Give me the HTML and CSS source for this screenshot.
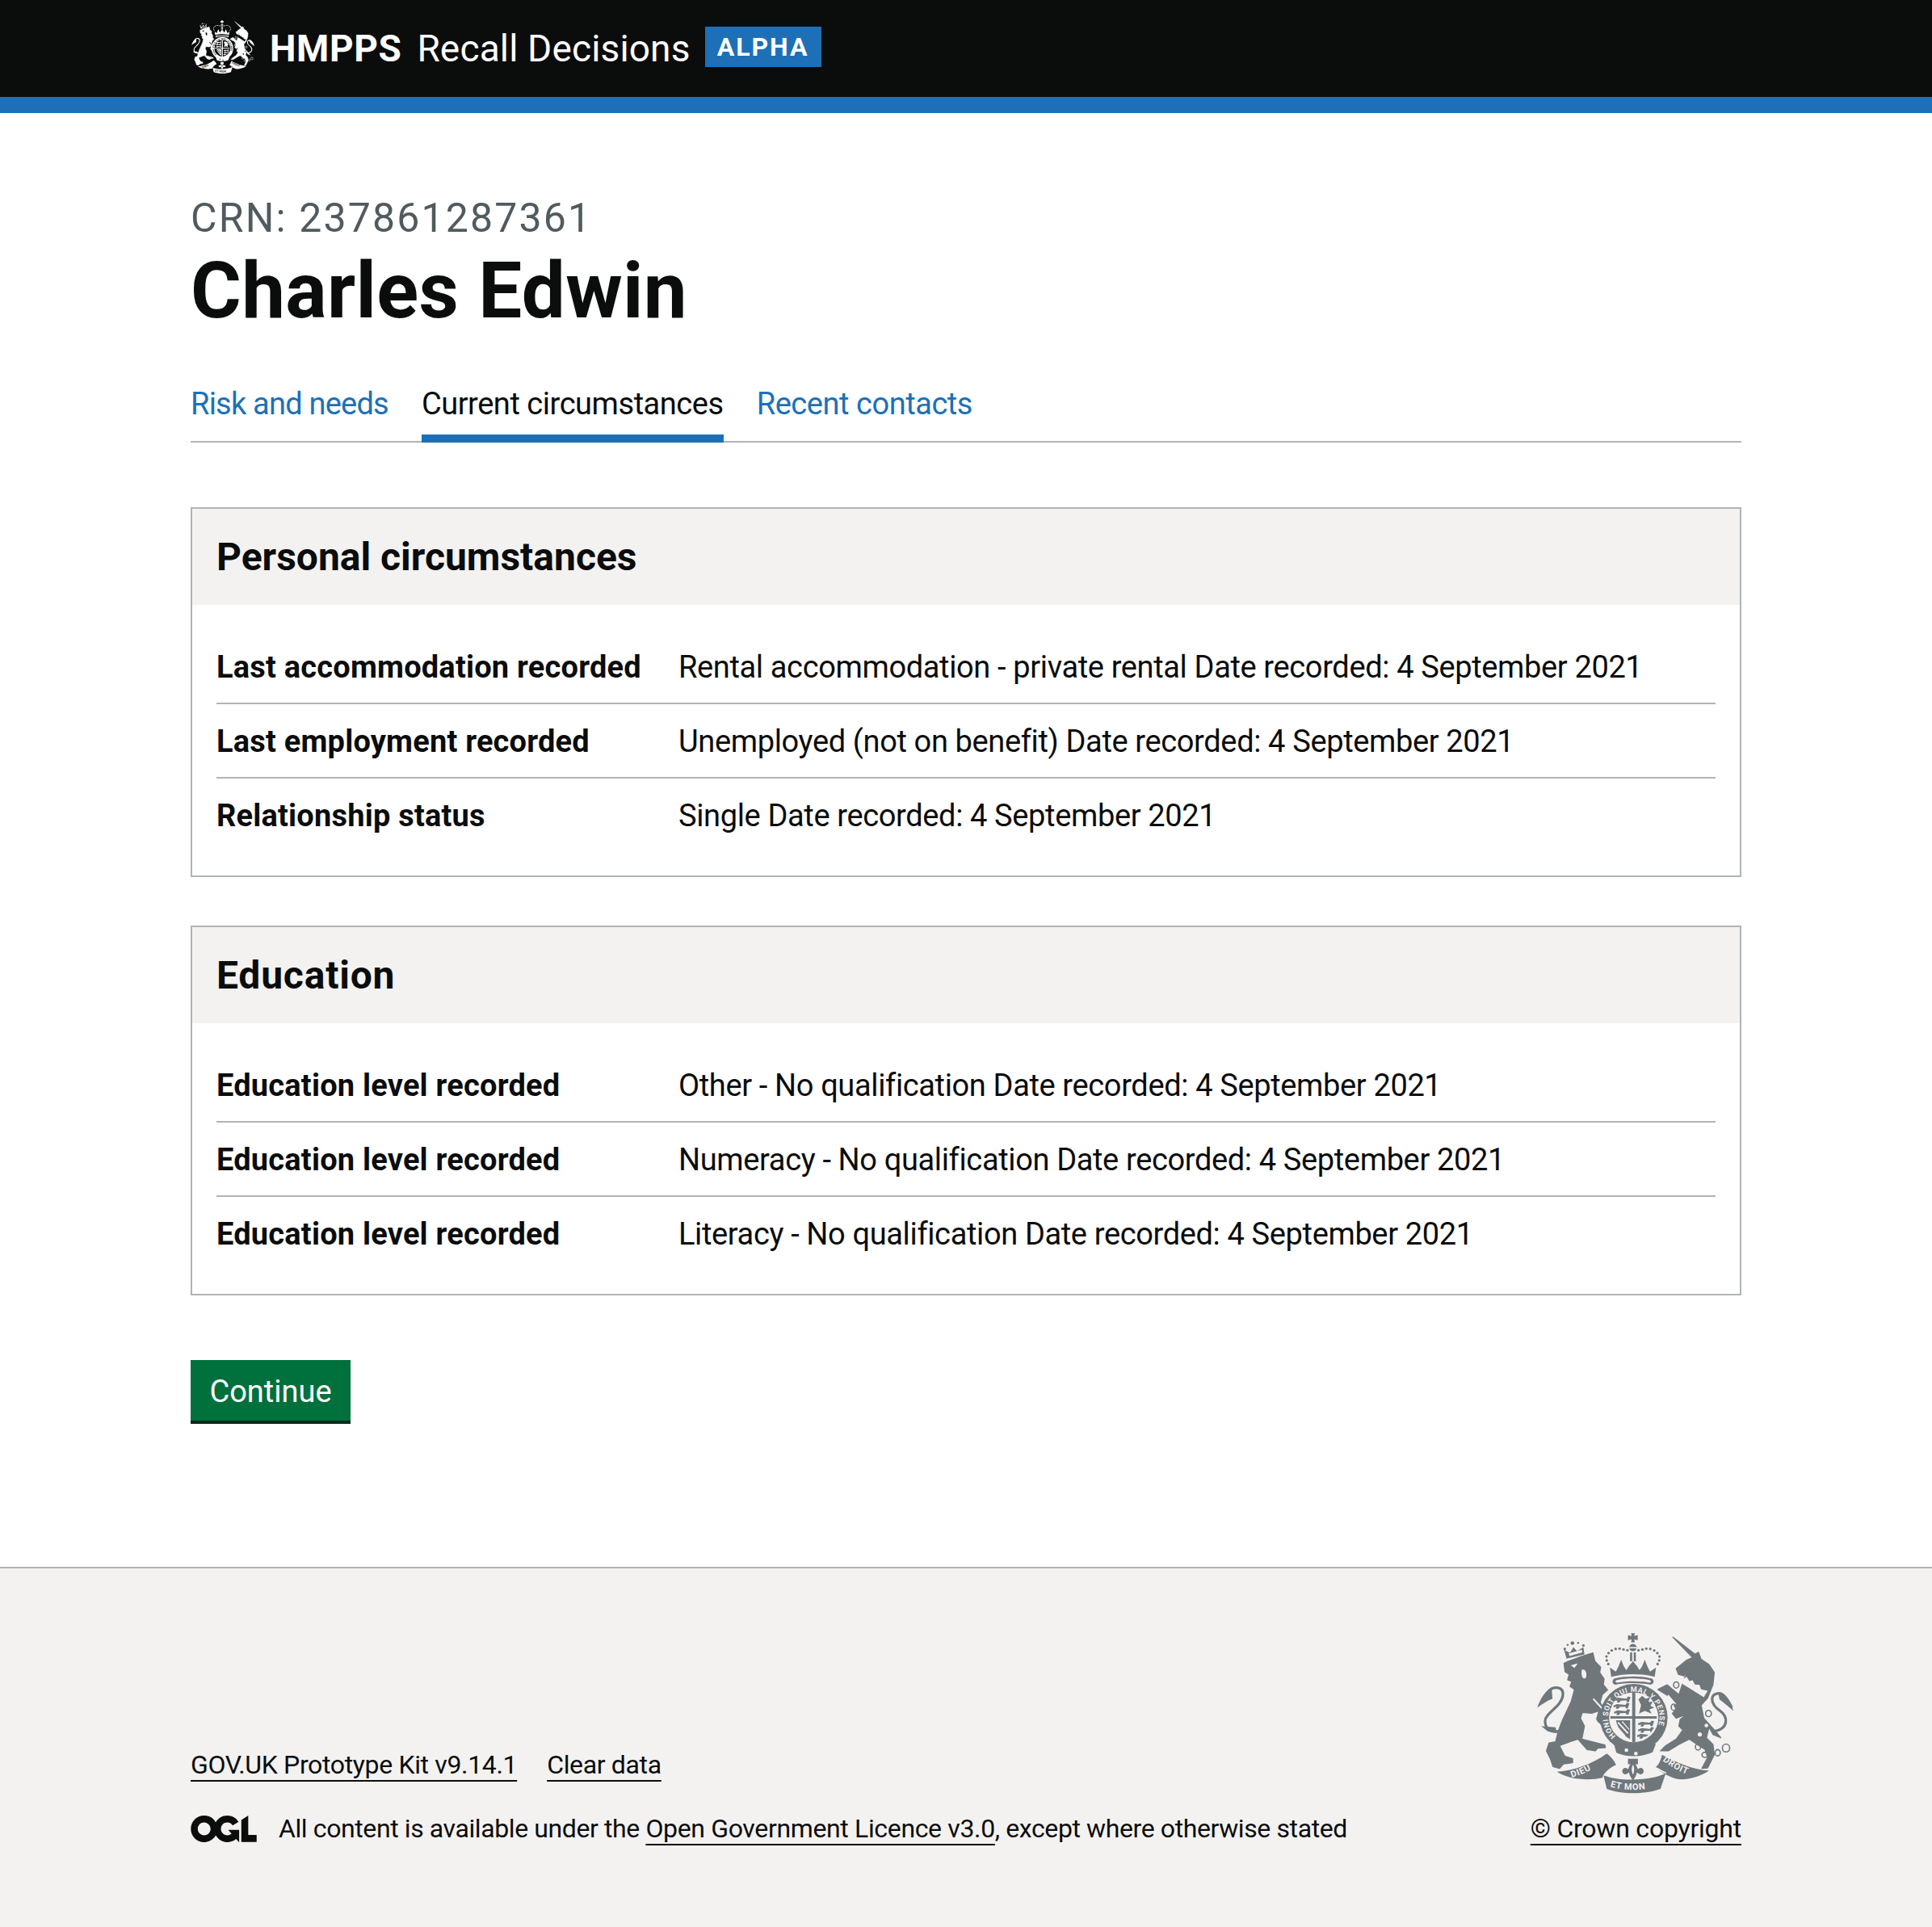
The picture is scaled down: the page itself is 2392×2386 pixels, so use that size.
FILE: index.html
```html
<!doctype html>
<html lang="en">
<head>
<meta charset="utf-8">
<title>Charles Edwin - Recall Decisions</title>
<link rel="stylesheet" href="styles.css">
</head>
<body>
<svg class="defs" width="0" height="0" aria-hidden="true">
  <defs>
    <path id="garter-arc" d="M420 458 A98 98 0 1 1 556 458"/>
    <path id="dieu-arc" d="M252 617 C290 606 330 588 372 556"/>
    <path id="etmon-arc" d="M398 652 C450 668 520 668 580 650"/>
    <path id="droit-arc" d="M598 552 C630 578 680 605 724 612"/>
    <clipPath id="shield-clip"><path d="M488 292 C540 292 575 320 577 380 C577 430 540 470 488 482 C436 470 398 430 398 380 C400 320 436 292 488 292 Z"/></clipPath>
    <path id="mini-lion" d="M0 6 L14 0 L46 3 L52 -5 L62 -2 L58 8 L56 16 L48 16 L46 10 L24 11 L20 18 L10 18 L12 10 L2 12 Z"/>
    <symbol id="crest" viewBox="110 55 770 630" preserveAspectRatio="none">
      <!-- lion -->
      <path class="crest-soft" d="M222 180 C240 170 300 150 332 140 L340 172 L362 195 L358 215 L375 240 L372 262 L388 282 L368 300 L360 330 L385 370 L392 410 L375 425 L350 400 L338 372 L292 368 L285 390 L300 420 L290 470 L330 480 L378 492 L380 502 L350 505 L342 515 L310 510 L275 470 L245 480 L205 495 L225 535 L255 545 L255 560 L220 565 L205 582 L180 575 L170 545 L155 515 L165 485 L190 480 L200 440 L215 400 L250 325 L262 280 L245 268 L252 250 L236 243 L242 222 L226 212 Z"/>
      <path class="crest-line" d="M200 440 C170 445 150 430 150 400 C150 370 215 345 218 300 C220 270 185 265 165 285"/>
      <path d="M175 272 C150 285 130 320 120 350 C140 335 160 322 178 316 Z"/>
      <path d="M135 420 L190 425 L195 447 L160 440 Z"/>
      <path class="crest-cut" d="M248 188 L275 180 L262 198 Z M290 205 C305 200 312 222 305 236 C296 244 286 232 290 205 Z"/>
      <path class="crest-cut" d="M335 313 L392 375 L385 378 L332 318 Z"/>
      <path class="crest-cut" d="M330 372 L345 392 L352 365 Z"/>
      <!-- lion crown -->
      <path d="M232 162 L222 128 L245 140 L258 118 L272 134 L296 118 L300 146 Z"/>
      <path class="crest-cut" d="M240 142 L290 128 L292 138 L243 152 Z"/>
      <circle cx="254" cy="103" r="7"/><circle cx="225" cy="125" r="5"/><circle cx="296" cy="112" r="5"/><circle cx="276" cy="102" r="4"/><circle cx="236" cy="110" r="4"/>
      <!-- unicorn -->
      <path class="crest-soft" d="M637 80 L722 145 L735 138 L745 165 L775 185 L795 215 L790 262 L770 312 L745 340 L755 390 L800 440 L820 465 L790 452 L775 425 L765 465 L790 490 L795 530 L770 580 L748 582 L770 540 L760 510 L730 490 L700 470 L660 490 L620 515 L590 515 L610 495 L650 470 L675 435 L660 420 L665 395 L690 375 L650 390 L635 372 L650 355 L620 305 L580 280 L615 262 L660 300 L680 240 L700 195 L680 228 L658 222 L650 200 L690 168 L712 158 Z"/>
      <path class="crest-cut" d="M675 240 L690 232 L700 248 L712 245 L722 262 L738 262 L745 280 L770 285 L755 310 L700 275 L672 258 Z"/>
      <path class="crest-cut" d="M620 300 L650 335 L632 345 L610 312 Z"/>
      <path class="crest-line" d="M795 440 C850 430 850 385 815 360 C780 335 775 295 815 295 C835 297 850 325 862 350"/>
      <path d="M810 292 C840 298 860 330 868 362 C850 345 830 330 815 318 Z"/>
      <g class="crest-ring"><ellipse cx="650" cy="263" rx="10" ry="12"/><ellipse cx="640" cy="348" rx="9" ry="12"/><ellipse cx="773" cy="372" rx="11" ry="12"/><ellipse cx="733" cy="500" rx="10" ry="12"/><ellipse cx="760" cy="530" rx="12" ry="10"/><ellipse cx="808" cy="522" rx="10" ry="12"/><ellipse cx="840" cy="504" rx="14" ry="15"/></g>
      <circle class="crest-cut" cx="765" cy="418" r="7"/><circle class="crest-cut" cx="740" cy="452" r="8"/>
      <!-- royal crown -->
      <path d="M478 65 H492 L490 76 L503 72 V92 L490 88 L492 100 H478 L480 88 L466 92 V72 L480 76 Z"/>
      <circle cx="485" cy="120" r="14"/>
      <path class="crest-cut" d="M471 118 H499 V123 H471 Z"/>
      <path d="M474 138 H482 V172 H474 Z M488 138 H496 V172 H488 Z"/>
      <g><circle cx="464" cy="130" r="5"/><circle cx="449" cy="127" r="5"/><circle cx="434" cy="124" r="5"/><circle cx="419" cy="125" r="5"/><circle cx="404" cy="131" r="5"/><circle cx="392" cy="141" r="5"/><circle cx="384" cy="154" r="5"/><circle cx="385" cy="169" r="5"/><circle cx="391" cy="183" r="5"/><circle cx="506" cy="130" r="5"/><circle cx="521" cy="127" r="5"/><circle cx="536" cy="124" r="5"/><circle cx="551" cy="125" r="5"/><circle cx="566" cy="131" r="5"/><circle cx="578" cy="141" r="5"/><circle cx="586" cy="154" r="5"/><circle cx="585" cy="169" r="5"/><circle cx="579" cy="183" r="5"/></g>
      <path d="M397 196 L420 212 L430 192 L440 166 L450 192 L460 206 L470 190 L485 172 L500 190 L510 206 L520 192 L530 166 L540 192 L550 212 L573 196 L568 232 C520 218 450 218 402 232 Z"/>
      <path d="M415 238 C460 228 520 228 556 238 C568 245 566 258 552 262 C510 254 460 254 418 262 C404 258 404 245 415 238 Z"/>
      <path class="crest-cut" d="M424 244 C465 236 510 236 548 244 C556 248 556 252 548 254 C510 247 465 247 424 254 C416 252 416 248 424 244 Z"/>
      <!-- garter and shield -->
      <circle cx="488" cy="388" r="129"/>
      <text class="crest-text garter"><textPath href="#garter-arc">HONI SOIT QUI MAL Y PENSE</textPath></text>
      <circle class="crest-gap" cx="488" cy="388" r="94"/>
      <g clip-path="url(#shield-clip)">
        <rect class="crest-cut" x="390" y="285" width="196" height="200"/>
        <path d="M482 285 H494 V485 H482 Z M390 382 H586 V392 H390 Z"/>
        <use href="#mini-lion" x="414" y="312"/>
        <use href="#mini-lion" x="410" y="336"/>
        <use href="#mini-lion" x="412" y="360"/>
        <path d="M508 372 L516 340 L506 318 L520 304 L534 316 L550 310 L544 328 L560 326 L552 342 L566 350 L548 356 L556 372 L530 362 Z"/>
        <path d="M420 398 H474 V470 C446 456 428 432 420 398 Z"/>
        <path class="crest-cut" d="M430 404 L468 446 L464 450 L426 408 Z M446 402 L470 430 L470 436 L442 404 Z M428 424 L456 456 L452 458 L426 430 Z"/>
        <use href="#mini-lion" x="504" y="404"/>
        <use href="#mini-lion" x="504" y="428"/>
        <use href="#mini-lion" x="500" y="450"/>
      </g>
      <path d="M412 488 L425 478 C465 508 520 508 558 480 L572 490 L560 520 C520 540 460 540 422 522 Z"/>
      <circle class="crest-cut" cx="460" cy="512" r="7"/><circle class="crest-cut" cx="496" cy="525" r="7"/>
      <!-- motto -->
      <path d="M195 595 C260 590 330 565 385 525 C405 540 418 558 420 570 C395 580 375 600 368 618 C315 630 240 625 195 595 Z"/>
      <path d="M372 606 C420 632 550 632 610 600 L590 660 C530 682 440 682 385 660 Z"/>
      <path d="M596 530 C640 555 720 590 775 590 C745 612 690 630 650 622 C625 615 595 600 572 578 C585 565 592 548 596 530 Z"/>
      <path class="crest-fold" d="M418 572 C400 582 382 598 374 610 M574 580 C590 590 602 596 612 600"/>
      <text class="crest-text motto"><textPath href="#dieu-arc">DIEU</textPath></text>
      <text class="crest-text motto"><textPath href="#etmon-arc">ET MON</textPath></text>
      <text class="crest-text motto"><textPath href="#droit-arc">DROIT</textPath></text>
      <path d="M466 545 H504 V566 H466 Z"/>
      <path d="M485 548 C495 565 500 575 504 585 C515 572 530 585 525 598 C515 612 505 600 500 598 C498 610 490 622 485 628 C480 622 472 610 470 598 C465 600 455 612 445 598 C440 585 455 572 466 585 C470 575 475 565 485 548 Z"/>
      <path class="crest-cut" d="M485 568 C490 578 492 590 485 606 C478 590 480 578 485 568 Z"/>
    </symbol>
  </defs>
</svg>

<header class="site-header">
  <div class="container header-inner">
    <svg class="header-crest" aria-hidden="true"><use href="#crest"/></svg>
    <a class="brand-org" href="#">HMPPS</a>
    <a class="brand-service" href="#">Recall Decisions</a>
    <strong class="phase-tag">ALPHA</strong>
  </div>
</header>

<main class="container main">
  <span class="caption">CRN: 237861287361</span>
  <h1 class="title">Charles Edwin</h1>

  <nav class="tabs">
    <a class="tab tab-first" href="#">Risk and needs</a>
    <a class="tab tab-current" href="#">Current circumstances</a>
    <a class="tab" href="#">Recent contacts</a>
  </nav>

  <section class="card">
    <h2 class="card-title">Personal circumstances</h2>
    <dl class="summary">
      <div class="row"><dt class="key">Last accommodation recorded</dt><dd class="value">Rental accommodation - private rental Date recorded: 4 September 2021</dd></div>
      <div class="row"><dt class="key">Last employment recorded</dt><dd class="value">Unemployed (not on benefit) Date recorded: 4 September 2021</dd></div>
      <div class="row"><dt class="key">Relationship status</dt><dd class="value">Single Date recorded: 4 September 2021</dd></div>
    </dl>
  </section>

  <section class="card">
    <h2 class="card-title card-title-short">Education</h2>
    <dl class="summary">
      <div class="row"><dt class="key">Education level recorded</dt><dd class="value">Other - No qualification Date recorded: 4 September 2021</dd></div>
      <div class="row"><dt class="key">Education level recorded</dt><dd class="value">Numeracy - No qualification Date recorded: 4 September 2021</dd></div>
      <div class="row"><dt class="key">Education level recorded</dt><dd class="value">Literacy - No qualification Date recorded: 4 September 2021</dd></div>
    </dl>
  </section>

  <a class="button" href="#">Continue</a>
</main>

<footer class="site-footer">
  <div class="container footer-inner">
    <div class="footer-meta">
      <div class="footer-links">
        <a class="footer-link" href="#">GOV.UK Prototype Kit v9.14.1</a>
        <a class="footer-link" href="#">Clear data</a>
      </div>
      <div class="licence">
        <svg class="ogl" viewBox="0 0 483.2 195.7" aria-hidden="true"><path fill="currentColor" d="M421.5 142.8V.1l-50.7 32.3v161.1h112.4v-50.7zm-122.3-9.6A47.12 47.12 0 0 1 221 97.8c0-26 21.1-47.1 47.1-47.1 16.7 0 31.4 8.7 39.7 21.8l42.7-27.2A97.63 97.63 0 0 0 268.1 0c-36.5 0-68.3 20.1-85.1 49.7A98 98 0 0 0 97.8 0C43.9 0 0 43.9 0 97.8s43.9 97.8 97.8 97.8c36.5 0 68.3-20.1 85.1-49.7a97.76 97.76 0 0 0 149.6 25.4l19.4 22.2h3v-87.8h-80l24.3 27.5zM97.8 145c-26 0-47.1-21.1-47.1-47.1s21.1-47.1 47.1-47.1 47.2 21 47.2 47S123.8 145 97.8 145"/></svg>
        <span class="licence-text">All content is available under the <a class="footer-link" href="#">Open Government Licence v3.0</a>, except where otherwise stated</span>
      </div>
    </div>
    <div class="footer-copyright">
      <svg class="footer-crest" aria-hidden="true"><use href="#crest"/></svg>
      <a class="footer-link copyright-link" href="#">© Crown copyright</a>
    </div>
  </div>
</footer>
</body>
</html>
```
FILE: styles.css
```css
* { box-sizing: border-box; }
html, body { margin: 0; padding: 0; }
body { font-family: Roboto, "Liberation Sans", sans-serif; color: #0b0c0c; background: #fff; }
.defs { position: absolute; }
.container { width: 1920px; margin: 0 auto; }

/* crest parts */
.crest-cut { fill: var(--crest-bg); }
.crest-soft { stroke: currentColor; stroke-width: 4; stroke-linejoin: round; }
.crest-line { fill: none; stroke: currentColor; stroke-width: 10; }
.crest-ring { fill: none; stroke: currentColor; stroke-width: 5; }
.crest-gap { fill: var(--crest-bg); }
.crest-fold { fill: none; stroke: var(--crest-bg); stroke-width: 5; }
.crest-text { fill: var(--crest-bg); font-family: Roboto, sans-serif; font-weight: 700; }
.garter { font-size: 28px; letter-spacing: 1.8px; }
.motto { font-size: 34px; letter-spacing: 2px; }
symbol { fill: currentColor; }

/* header */
.site-header { background: #0b0c0c; border-bottom: 20px solid #1d70b8; height: 140px; color: #fff; --crest-bg: #0b0c0c; }
.header-inner { display: flex; align-items: center; height: 116px; }
.header-crest { width: 80px; height: 68px; margin-right: 18px; fill: #fff; color: #fff; }
.brand-org { color: #fff; text-decoration: none; font-weight: 700; font-size: 46px; line-height: 60px; letter-spacing: .6px; margin: 4px 19px 0 0; }
.brand-service { color: #fff; text-decoration: none; font-size: 46px; line-height: 60px; letter-spacing: .15px; margin: 4px 18px 0 0; }
.phase-tag { display: block; background: #1d70b8; color: #fff; width: 144px; height: 50px; font-size: 32px; line-height: 50px; letter-spacing: 2px; text-align: center; }

/* heading */
.main { padding: 100px 0 177px; }
.caption { display: block; font-size: 50px; line-height: 60px; color: #505a5f; letter-spacing: 2.15px; }
.title { margin: 0; font-size: 96px; line-height: 120px; font-weight: 700; letter-spacing: .35px; }

/* tabs */
.tabs { display: flex; gap: 41px; margin-top: 55px; border-bottom: 2px solid #b1b4b6; margin-bottom: 80px; }
.tab { display: block; font-size: 38px; line-height: 50px; color: #1d70b8; letter-spacing: -.45px; text-decoration: none; padding: 0 0 21px; margin-bottom: -2px; }
.tab-first { letter-spacing: -.78px; }
.tab-current { color: #0b0c0c; border-bottom: 10px solid #1d70b8; padding-bottom: 13px; }

/* cards */
.card { border: 2px solid #b1b4b6; margin-bottom: 60px; }
.card-title { margin: 0; background: #f3f2f1; padding: 30px; height: 119px; font-size: 48px; line-height: 60px; font-weight: 700; }
.card-title-short { letter-spacing: .8px; }
.summary { margin: 0; padding: 31px 30px 30px; }
.row { display: flex; border-bottom: 2px solid #b1b4b6; padding: 21px 0 19px; }
.row:last-child { border-bottom: 0; }
.key { width: 572px; font-size: 38px; line-height: 50px; font-weight: 700; letter-spacing: .2px; }
.value { margin: 0; font-size: 38px; line-height: 50px; letter-spacing: -.36px; }

/* button */
.button { display: block; width: 198px; height: 79px; margin-top: 80px; background: #00703c; border-bottom: 4px solid #002d18; color: #fff; font-size: 38px; line-height: 78px; text-align: center; text-decoration: none; }

/* footer */
.site-footer { background: #f3f2f1; border-top: 2px solid #b1b4b6; height: 446px; --crest-bg: #f3f2f1; }
.footer-inner { display: flex; justify-content: space-between; align-items: flex-end; height: 100%; padding-bottom: 102px; }
.footer-links { display: flex; gap: 37px; margin-bottom: 39px; }
.footer-link { font-size: 32px; line-height: 40px; color: #0b0c0c; letter-spacing: -.35px; text-decoration: underline; text-decoration-thickness: 2px; text-underline-offset: 8px; }
.copyright-link { letter-spacing: -.22px; }
.licence { display: flex; align-items: center; gap: 27px; }
.ogl { width: 82px; height: 33px; color: #0b0c0c; flex: none; }
.licence-text { font-size: 32px; line-height: 40px; letter-spacing: -.4px; }
.footer-copyright { display: flex; flex-direction: column; align-items: flex-end; }
.footer-crest { width: 250px; height: 204px; margin: 0 6px 21px 0; fill: #6f777b; color: #6f777b; }
```
